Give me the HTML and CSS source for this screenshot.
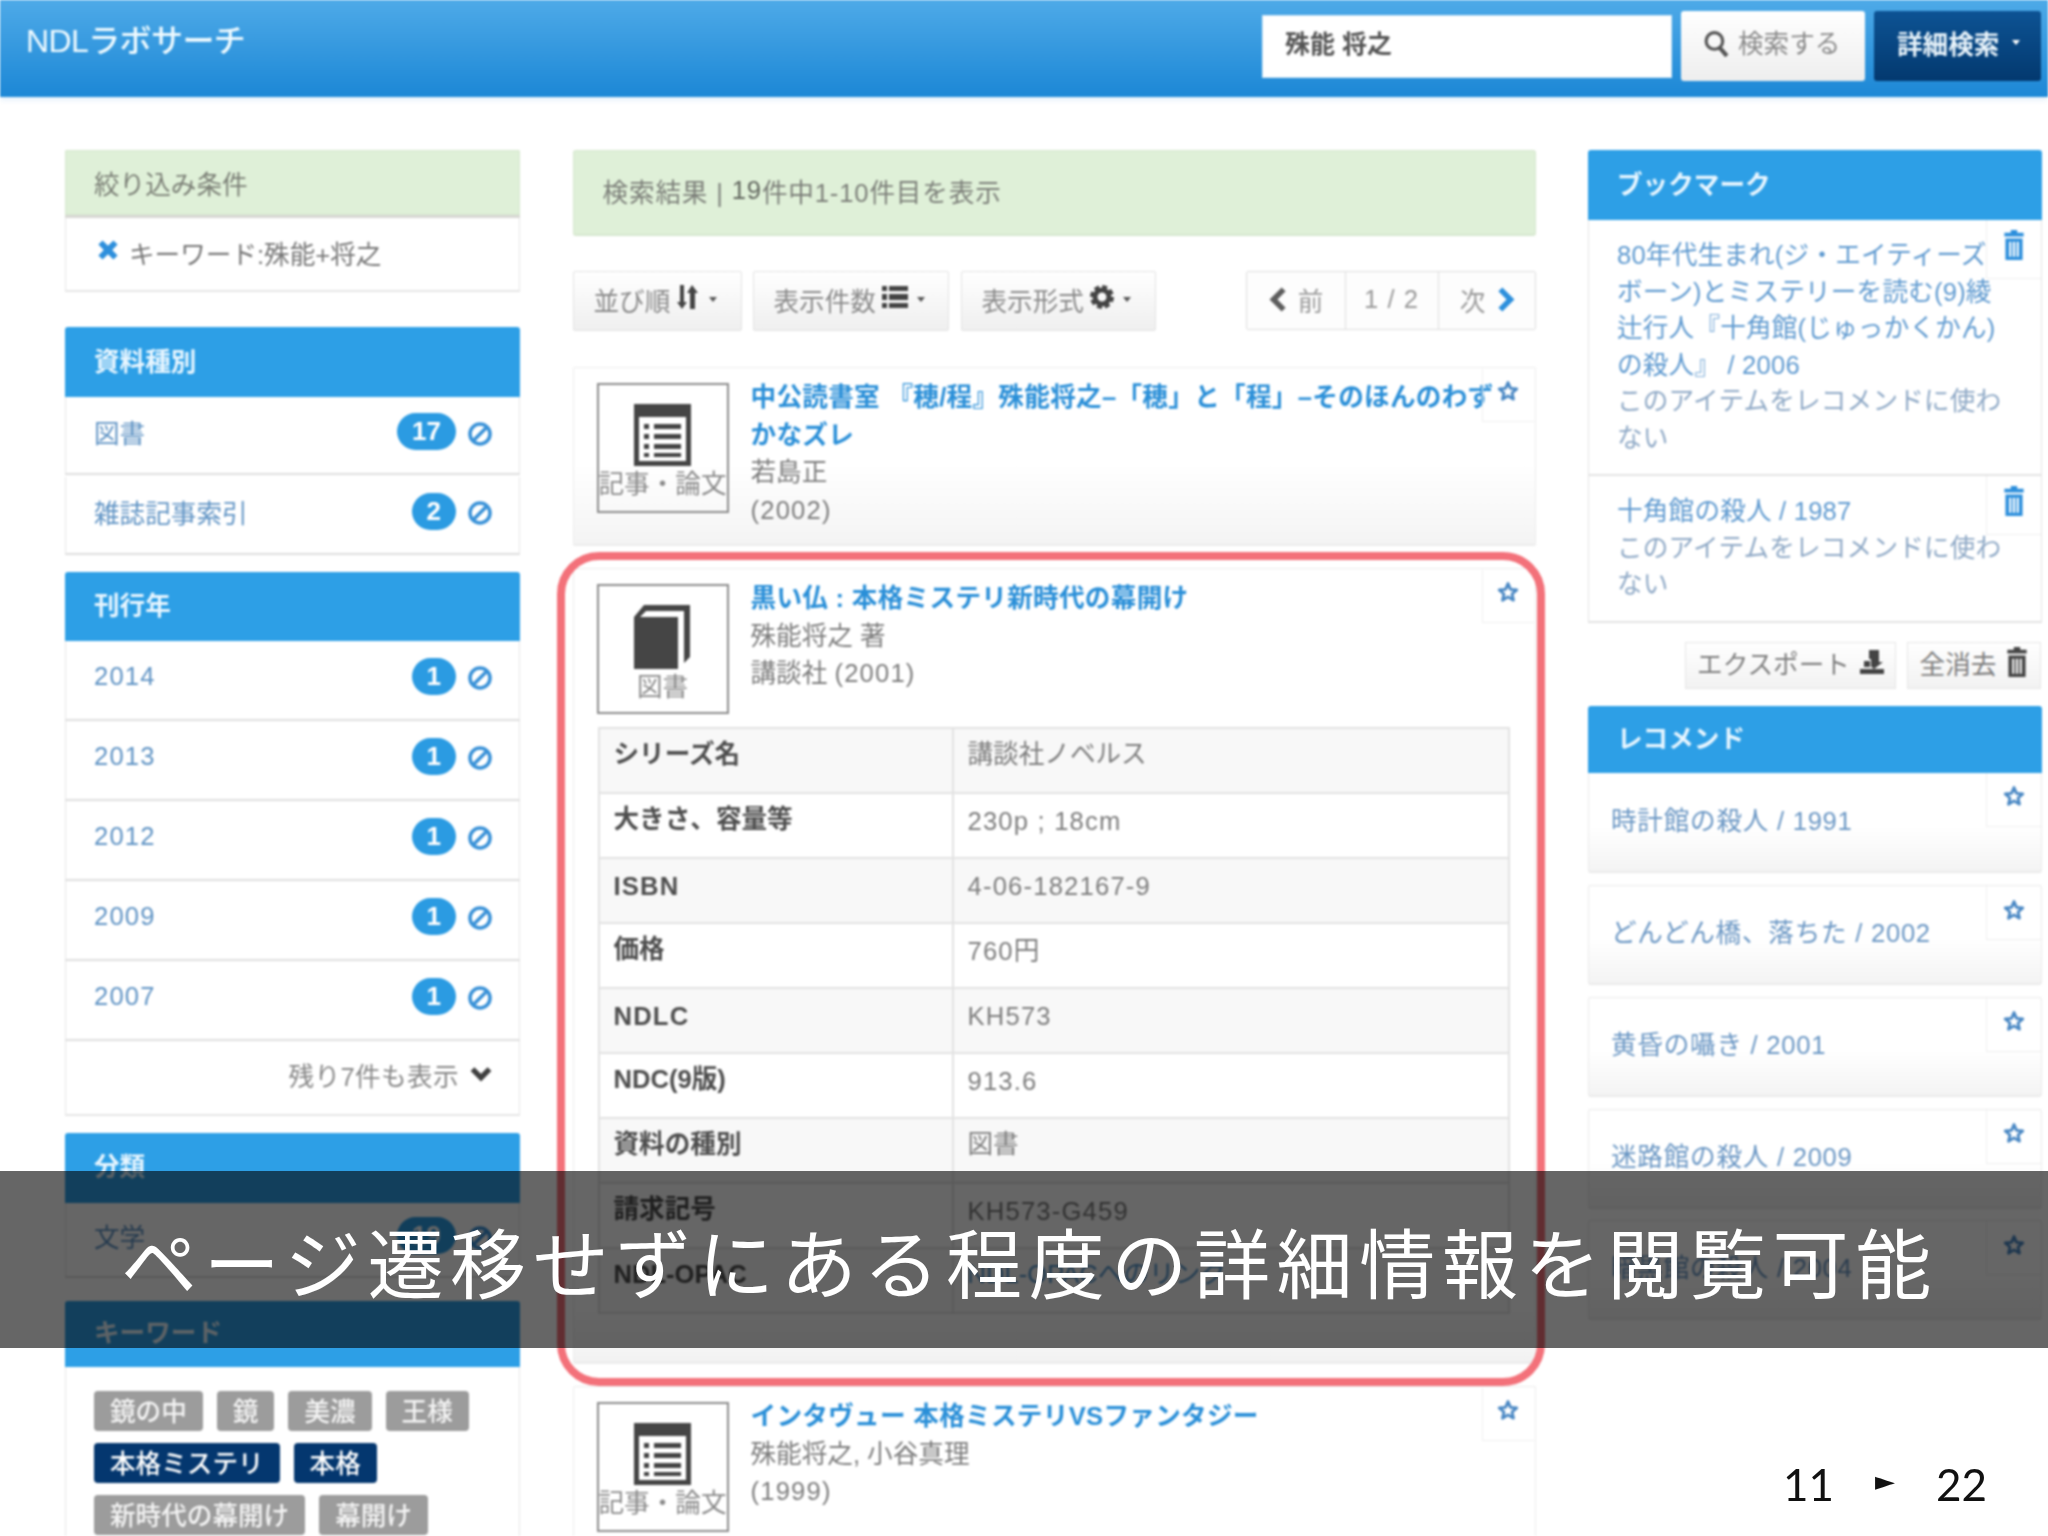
FILE: index.html
```html
<!DOCTYPE html>
<html lang="ja">
<head>
<meta charset="utf-8">
<title>NDLラボサーチ</title>
<link rel="stylesheet" href="styles.css">
</head>
<body>
<svg class="defs" aria-hidden="true">
  <symbol id="i-x" viewBox="0 0 20 20"><path d="M2 5.5 5.5 2 10 6.5 14.500 2 18 5.500 13.500 10 18 14.500 14.500 18 10 13.500 5.500 18 2 14.500 6.500 10Z" fill="currentColor"/></symbol>
  <symbol id="i-ban" viewBox="0 0 26 26"><circle cx="13" cy="13" r="10" fill="none" stroke="currentColor" stroke-width="3.600"/><path d="M6 20 20 6" stroke="currentColor" stroke-width="3.600"/></symbol>
  <symbol id="i-doc" viewBox="0 0 57 62"><path fill-rule="evenodd" fill="currentColor" d="M0 0H57V62H0ZM5 13V57H52V13Z"/><g fill="currentColor"><rect x="10" y="20" width="5" height="5"/><rect x="10" y="30" width="5" height="5"/><rect x="10" y="40" width="5" height="5"/><rect x="10" y="49" width="5" height="4"/><rect x="20" y="20" width="27" height="5"/><rect x="20" y="30" width="27" height="5"/><rect x="20" y="40" width="27" height="5"/><rect x="20" y="49" width="27" height="4"/></g></symbol>
  <symbol id="i-book" viewBox="0 0 57 64"><path fill="currentColor" d="M0 12 10 0H56V52L50 58V6H12L6 12H44V64H0Z"/></symbol>
  <symbol id="i-star" viewBox="0 0 22 22"><path d="M11 2.500 13.500 8.400 19.800 8.900 15 13 16.500 19.200 11 15.900 5.500 19.200 7 13 2.200 8.900 8.500 8.400Z" fill="none" stroke="currentColor" stroke-width="2.800" stroke-linejoin="round"/></symbol>
  <symbol id="i-search" viewBox="0 0 26 26"><circle cx="11" cy="10.500" r="8" fill="none" stroke="currentColor" stroke-width="3"/><path d="M16 17 23 25" stroke="currentColor" stroke-width="4"/></symbol>
  <symbol id="i-sort" viewBox="0 0 24 26"><path fill="currentColor" d="M4 1H8V18H11L6 25 1 18H4ZM16 1 22 9H19V25H14V9H11Z"/></symbol>
  <symbol id="i-rows" viewBox="0 0 26 22"><path fill="currentColor" d="M0 0H5V5H0ZM7 0H26V5H7ZM0 8H5V14H0ZM7 8H26V14H7ZM0 17H5V22H0ZM7 17H26V22H7Z"/></symbol>
  <symbol id="i-cog" viewBox="0 0 24 24"><circle cx="12" cy="12" r="7" fill="none" stroke="currentColor" stroke-width="5"/><circle cx="12" cy="12" r="10" fill="none" stroke="currentColor" stroke-width="4" stroke-dasharray="4.850 2.990"/></symbol>
  <symbol id="i-left" viewBox="0 0 16 24"><path d="M13 3 4 12 13 21" fill="none" stroke="currentColor" stroke-width="5"/></symbol>
  <symbol id="i-right" viewBox="0 0 16 24"><path d="M3 3 12 12 3 21" fill="none" stroke="currentColor" stroke-width="5"/></symbol>
  <symbol id="i-down" viewBox="0 0 22 16"><path d="M3 3 11 11 19 3" fill="none" stroke="currentColor" stroke-width="5"/></symbol>
  <symbol id="i-trash" viewBox="0 0 20 28"><path fill="currentColor" fill-rule="evenodd" d="M7 0H13V2.500H19V6H1V2.500H7ZM2 8H18V28H2ZM5.500 11V25H7.500V11ZM9 11V25H11V11ZM12.500 11V25H14.500V11Z"/></symbol>
  <symbol id="i-export" viewBox="0 0 24 24"><path fill="currentColor" d="M9 0H19V12H23L14 19 11 16.500V9H9ZM0 19H24V24H0Z"/><rect x="4" y="11" width="6" height="6" fill="currentColor"/></symbol>
</svg>

<div class="shot">
  <header class="topbar">
    <div class="brand">NDLラボサーチ</div>
    <div class="search">
      <div class="search-input">殊能 将之</div>
      <div class="search-btn"><svg class="ic ic-search"><use href="#i-search"/></svg>検索する</div>
      <div class="adv-btn">詳細検索<span class="caret caret-light"></span></div>
    </div>
  </header>

  <div class="columns">
    <aside class="col-left">
      <section class="panel panel-filter">
        <h3 class="panel-head panel-head-green">絞り込み条件</h3>
        <div class="filter-row"><svg class="ic ic-x"><use href="#i-x"/></svg>キーワード:殊能+将之</div>
      </section>

      <section class="panel">
        <h3 class="panel-head">資料種別</h3>
        <div class="facet facet-type"><span class="facet-label">図書</span><span class="badge">17</span><svg class="ic ic-ban"><use href="#i-ban"/></svg></div>
        <div class="facet facet-type"><span class="facet-label">雑誌記事索引</span><span class="badge">2</span><svg class="ic ic-ban"><use href="#i-ban"/></svg></div>
      </section>

      <section class="panel">
        <h3 class="panel-head panel-head-year">刊行年</h3>
        <div class="facet"><span class="facet-label num">2014</span><span class="badge">1</span><svg class="ic ic-ban"><use href="#i-ban"/></svg></div>
        <div class="facet"><span class="facet-label num">2013</span><span class="badge">1</span><svg class="ic ic-ban"><use href="#i-ban"/></svg></div>
        <div class="facet"><span class="facet-label num">2012</span><span class="badge">1</span><svg class="ic ic-ban"><use href="#i-ban"/></svg></div>
        <div class="facet"><span class="facet-label num">2009</span><span class="badge">1</span><svg class="ic ic-ban"><use href="#i-ban"/></svg></div>
        <div class="facet"><span class="facet-label num">2007</span><span class="badge">1</span><svg class="ic ic-ban"><use href="#i-ban"/></svg></div>
        <div class="more-row">残り7件も表示<svg class="ic ic-down"><use href="#i-down"/></svg></div>
      </section>

      <section class="panel panel-class">
        <h3 class="panel-head">分類</h3>
        <div class="facet facet-class"><span class="facet-label">文学</span><span class="badge">19</span><svg class="ic ic-ban"><use href="#i-ban"/></svg></div>
      </section>

      <section class="panel">
        <h3 class="panel-head panel-head-kw">キーワード</h3>
        <div class="tags">
          <span class="tag">鏡の中</span><span class="tag">鏡</span><span class="tag">美濃</span><span class="tag">王様</span>
          <span class="tag tag-on">本格ミステリ</span><span class="tag tag-on">本格</span>
          <span class="tag">新時代の幕開け</span><span class="tag">幕開け</span>
        </div>
      </section>
    </aside>

    <main class="col-main">
      <div class="alert">検索結果 | <b>19</b>件中1-10件目を表示</div>

      <div class="toolbar">
        <div class="tool-btn tool-sort">並び順<svg class="ic ic-sort"><use href="#i-sort"/></svg><span class="caret"></span></div>
        <div class="tool-btn tool-count">表示件数<svg class="ic ic-rows"><use href="#i-rows"/></svg><span class="caret"></span></div>
        <div class="tool-btn tool-view">表示形式<svg class="ic ic-cog"><use href="#i-cog"/></svg><span class="caret"></span></div>
        <div class="pager">
          <div class="page-cell page-prev"><svg class="ic ic-chev ic-chev-dark"><use href="#i-left"/></svg>前</div>
          <div class="page-cell page-num">1 / 2</div>
          <div class="page-cell page-next">次<svg class="ic ic-chev"><use href="#i-right"/></svg></div>
        </div>
      </div>

      <article class="card">
        <div class="star-box"><svg class="ic ic-star"><use href="#i-star"/></svg></div>
        <div class="card-head">
          <div class="type-box"><svg class="ic ic-doc"><use href="#i-doc"/></svg><span>記事・論文</span></div>
          <div class="card-text">
            <a class="card-title">中公読書室 『穂/程』殊能将之–「穂」と「程」–そのほんのわずかなズレ</a>
            <div>若島正</div>
            <div class="num">(2002)</div>
          </div>
        </div>
      </article>

      <article class="card card-open">
        <div class="star-box"><svg class="ic ic-star"><use href="#i-star"/></svg></div>
        <div class="card-head">
          <div class="type-box"><svg class="ic ic-book"><use href="#i-book"/></svg><span>図書</span></div>
          <div class="card-text">
            <a class="card-title">黒い仏 : 本格ミステリ新時代の幕開け</a>
            <div>殊能将之 著</div>
            <div>講談社 <span class="num">(2001)</span></div>
          </div>
        </div>
        <table class="detail">
          <tr><th>シリーズ名</th><td>講談社ノベルス</td></tr>
          <tr><th>大きさ、容量等</th><td class="num">230p ; 18cm</td></tr>
          <tr><th class="num">ISBN</th><td class="num">4-06-182167-9</td></tr>
          <tr><th>価格</th><td class="num">760円</td></tr>
          <tr><th class="num">NDLC</th><td class="num">KH573</td></tr>
          <tr><th>NDC(9版)</th><td class="num">913.6</td></tr>
          <tr><th>資料の種別</th><td>図書</td></tr>
          <tr><th>請求記号</th><td class="num">KH573-G459</td></tr>
          <tr><th>NDL-OPAC</th><td><a class="link-plain">NDL-OPACへのリンク</a></td></tr>
        </table>
      </article>

      <article class="card card-last">
        <div class="star-box"><svg class="ic ic-star"><use href="#i-star"/></svg></div>
        <div class="card-head">
          <div class="type-box"><svg class="ic ic-doc"><use href="#i-doc"/></svg><span>記事・論文</span></div>
          <div class="card-text">
            <a class="card-title">インタヴュー 本格ミステリVSファンタジー</a>
            <div>殊能将之, 小谷真理</div>
            <div class="num">(1999)</div>
          </div>
        </div>
      </article>
    </main>

    <aside class="col-right">
      <section class="panel panel-bm">
        <h3 class="panel-head">ブックマーク</h3>
        <div class="bm-item">
          <div class="del-box"><svg class="ic ic-trash"><use href="#i-trash"/></svg></div>
          <a class="bm-link">80年代生まれ(ジ・エイティーズ<br>ボーン)とミステリーを読む(9)綾<br>辻行人『十角館(じゅっかくかん)<br>の殺人』 / 2006</a>
          <div class="bm-note">このアイテムをレコメンドに使わ<br>ない</div>
        </div>
        <div class="bm-item">
          <div class="del-box"><svg class="ic ic-trash"><use href="#i-trash"/></svg></div>
          <a class="bm-link">十角館の殺人 / 1987</a>
          <div class="bm-note">このアイテムをレコメンドに使わ<br>ない</div>
        </div>
      </section>

      <div class="bm-actions">
        <div class="action-btn action-export">エクスポート<svg class="ic ic-export"><use href="#i-export"/></svg></div>
        <div class="action-btn action-clear">全消去<svg class="ic ic-trash-dark"><use href="#i-trash"/></svg></div>
      </div>

      <section class="panel panel-rec">
        <h3 class="panel-head panel-head-rec">レコメンド</h3>
        <div class="rec-item rec-first"><div class="star-box star-box-rec"><svg class="ic ic-star"><use href="#i-star"/></svg></div>時計館の殺人 / 1991</div>
      </section>
      <div class="rec-item"><div class="star-box star-box-rec"><svg class="ic ic-star"><use href="#i-star"/></svg></div>どんどん橋、落ちた / 2002</div>
      <div class="rec-item"><div class="star-box star-box-rec"><svg class="ic ic-star"><use href="#i-star"/></svg></div>黄昏の囁き / 2001</div>
      <div class="rec-item"><div class="star-box star-box-rec"><svg class="ic ic-star"><use href="#i-star"/></svg></div>迷路館の殺人 / 2009</div>
      <div class="rec-item"><div class="star-box star-box-rec"><svg class="ic ic-star"><use href="#i-star"/></svg></div>暗黒館の殺人 / 2004</div>
    </aside>
  </div>
</div>

<div class="band">ページ遷移せずにある程度の詳細情報を閲覧可能</div>
<div class="slide-no"><span>11</span><span class="slide-arrow">►</span><span>22</span></div>
</body>
</html>
```

FILE: styles.css
```css
* { box-sizing: border-box; }
html, body { margin: 0; padding: 0; height: 1536px; overflow: hidden; background: #fff; }
body {
  position: relative;
  width: 2048px;
  font-family: "Liberation Sans", "Noto Sans CJK JP", sans-serif;
  font-size: 25.6px;
  color: #6b6b6b;
}
.defs { position: absolute; width: 0; height: 0; }
.shot { filter: blur(0.9px); height: 1536px; overflow: hidden; }
.ic { display: block; flex: none; }
.num { letter-spacing: 1.2px; }

/* top bar */
.topbar {
  height: 97px;
  display: flex;
  align-items: center;
  justify-content: space-between;
  padding: 0 7px 0 26px;
  background: linear-gradient(#4eaae8, #1d88d6);
  border-bottom: 2px solid #1e8ad8;
  box-shadow: 0 3px 5px rgba(30, 130, 210, .12);
}
.brand { color: #eefaff; font-size: 32px; letter-spacing: -.6px; font-weight: 500; margin-bottom: 19px; }
.search { display: flex; gap: 9px; align-items: center; margin-bottom: 3px; }
.search-input {
  width: 410px; height: 63px; background: #fff; padding: 0 0 8px 22px;
  display: flex; align-items: center; color: #555; font-weight: 700; font-size: 25px;
  border: 1px solid #cfe6f5;
}
.search-btn {
  width: 184px; height: 70px; display: flex; align-items: center; gap: 8px;
  padding: 0 0 9px 22px; background: linear-gradient(#fff, #eeeeee); color: #8a8a8a; font-size: 25.6px; border-radius: 3px;
}
.ic-search { width: 27px; height: 27px; color: #555; margin-top: 4px; }
.adv-btn {
  width: 167px; height: 70px; display: flex; align-items: center; padding: 0 0 8px 23px;
  background: linear-gradient(#0d5394, #03396f); color: #e9f4fb; font-weight: 700; font-size: 25.6px; border-radius: 3px;
}
.caret { display: block; width: 0; height: 0; margin-left: 9px; border: 4px solid transparent; border-top: 5px solid #555; margin-top: 5px; }
.caret-light { border-top-color: #fff; margin-left: 13px; }

/* columns */
.columns {
  display: grid;
  grid-template-columns: 455px 963px 454px;
  column-gap: 52.500px;
  padding: 53px 0 0 65px;
  align-items: start;
}
h3 { margin: 0; font-size: inherit; font-weight: 700; }

/* panels */
.panel { margin-bottom: 17px; background: #fff; }
.panel-filter { margin-bottom: 35px; }
.panel-class { margin-bottom: 23px; }
.panel-head {
  height: 70px; display: flex; align-items: center; padding: 0 0 6px 29px;
  background: #2d9fe6; color: #e8f6ff; border-radius: 3px 3px 0 0; font-size: 25.6px;
}
.panel-head-year { height: 69px; }
.panel-head-kw { height: 66px; }
.panel-head-green {
  height: 68px; padding-bottom: 1px; background: #dff0d8; color: #7b7f76; font-weight: 400;
  border-bottom: 3px solid #d8d8d4; border-radius: 2px 2px 0 0; box-shadow: inset 0 0 0 1px #d6e7cf;
}
.filter-row {
  height: 74px; display: flex; align-items: center; gap: 9px; padding: 0 0 4px 30px;
  border: 1px solid #e6e6e6; border-top: 0; border-bottom-width: 2px; color: #777;
}
.ic-x { width: 24px; height: 24px; color: #2d8fdc; margin-bottom: 4px; }

.facet {
  height: 80px; display: flex; align-items: center; padding: 0 26px 7px 28px;
  border: 1px solid #e6e6e6; border-top: 0; border-bottom: 2px solid #dedede;
}
.facet-type { height: 78px; }
.facet-type + .facet-type { margin-top: 1.500px; }
.facet-class { height: 75px; }
.facet-label { flex: 1; color: #5f93c4; }
.facet .ic-ban { margin-top: 4px; }
.badge {
  min-width: 42px; height: 37px; border-radius: 19px; padding: 0 15px;
  background: #2b9be2; color: #fff; font-weight: 700; font-size: 26px;
  display: flex; align-items: center; justify-content: center; margin-right: 11px;
}
.ic-ban { width: 26px; height: 26px; color: #3a92d8; }
.more-row {
  height: 75px; display: flex; align-items: center; justify-content: flex-end; gap: 10px;
  padding: 0 26px 6px 0; border: 1px solid #e6e6e6; border-top: 0; border-bottom-width: 2px; color: #888; letter-spacing: .4px;
}
.ic-down { width: 24px; height: 17px; color: #3f3f3f; }
.tags {
  display: flex; flex-wrap: wrap; align-content: flex-start; column-gap: 14px; row-gap: 12px;
  padding: 24px 40px 0 28px; border: 1px solid #e6e6e6; border-top: 0; height: 180px;
}
.tag {
  height: 40px; padding: 0 16px 3px; background: #9c9c9c; color: #f4f4f4; border-radius: 4px;
  display: flex; align-items: center; font-weight: 500;
}
.tag-on { background: #04376f; color: #fff; }

/* main column */
.alert {
  height: 86px; display: flex; align-items: center; padding: 0 0 4px 29px; white-space: pre;
  background: #dff0d8; color: #7c7f79; border-radius: 3px; margin-bottom: 35px; letter-spacing: .85px;
  border: 1px solid #d6e7cf; border-bottom-width: 2px;
}
.alert b { color: #62675f; font-weight: 500; }
.toolbar { display: flex; height: 60px; margin-bottom: 36px; color: #8a8a8a; }
.tool-btn {
  display: flex; align-items: center; height: 60px; padding: 0 0 4px 20px;
  background: linear-gradient(#fff, #efefef); border: 1px solid #e3e3e3; border-radius: 2px; font-size: 25.6px;
}
.tool-sort { width: 169px; margin-right: 11px; }
.tool-count { width: 196px; margin-right: 12px; }
.tool-view { width: 195px; }
.ic-sort { width: 24px; height: 26px; color: #444; margin: 0 0 4px 6px; }
.ic-rows { width: 26px; height: 22px; color: #444; margin: 0 0 4px 6px; }
.ic-cog { width: 24px; height: 24px; color: #444; margin: 0 0 4px 6px; }
.pager { margin-left: auto; display: flex; height: 59px; border: 1px solid #dedede; border-radius: 2px; }
.page-cell { display: flex; align-items: center; justify-content: center; gap: 10px; padding-bottom: 3px; border-left: 1px solid #dedede; background: #fdfdfd; color: #9a9a9a; }
.page-prev { width: 98px; border-left: 0; }
.page-num { width: 93px; letter-spacing: 1px; }
.page-next { width: 97px; gap: 11px; padding-left: 3px; }
.ic-chev { width: 20px; height: 27px; color: #2d8fdc; }
.ic-chev-dark { color: #5d5d5d; }

.card {
  position: relative; margin-bottom: 22px; padding: 15px 0 0 23px; height: 179px;
  border: 1px solid #ececec; border-bottom-width: 2px;
  background: linear-gradient(#fff 55%, #f4f4f4);
  border-radius: 2px;
}
.card-open { height: 796px; background: linear-gradient(#fff 93%, #f1f1f1); }
.card-open::after {
  content: ""; position: absolute; inset: -17px -10px -24px -17px;
  border: 8px solid #f3717a; border-radius: 42px; pointer-events: none;
}
.card-last { height: 300px; background: #fff; border-bottom: 0; }
.star-box {
  position: absolute; top: 1px; right: 1px; width: 52px; height: 53px;
  display: flex; align-items: center; justify-content: center;
  border-left: 1px solid #efefef; border-bottom: 1px solid #efefef; padding-bottom: 8px;
}
.ic-star { width: 22px; height: 22px; color: #4a88c4; }
.card-head { display: flex; gap: 22px; }
.type-box {
  width: 132px; height: 130px; flex: none; border: 2px solid #8c8c8c;
  display: flex; flex-direction: column; align-items: center; padding-top: 19px;
  white-space: nowrap; line-height: 37px; color: #8a8a8a;
}
.ic-doc { width: 57px; height: 62px; color: #454545; }
.ic-book { width: 57px; height: 64px; color: #454545; }
.card-text { width: 748px; margin-top: -4px; line-height: 37.500px; color: #7d7d7d; }
.card-title { display: block; color: #2a8fd8; font-weight: 700; letter-spacing: .3px; }
.detail {
  width: 912px; margin: 13px 0 0 1px; border-collapse: collapse; table-layout: fixed;
}
.detail tr { height: 65px; }
.detail tr:nth-child(odd) { background: #f8f8f8; }
.detail th, .detail td { border: 2px solid #e2e2e2; padding: 0 0 13px 14px; text-align: left; line-height: 32px; }
.detail th.num, .detail td.num { padding-bottom: 9px; }
.detail th { width: 354px; color: #4e4e4e; font-weight: 700; }
.detail td { color: #7d7d7d; }
.link-plain { color: #4f90c6; }

/* right column */
.panel-bm { margin-bottom: 19px; }
.bm-item {
  position: relative; padding: 17px 32px 18px 28px; line-height: 36.500px;
  border: 1px solid #e3e3e3; border-top: 0; border-bottom-width: 2px; white-space: nowrap; letter-spacing: .2px;
}
.bm-link { color: #5f9ad0; display: block; }
.bm-note { color: #8fa9c6; }
.del-box {
  position: absolute; top: 0; right: 0; width: 55px; height: 59px; background: #fff;
  display: flex; justify-content: center; padding-top: 10px;
  border-left: 1px solid #efefef; border-bottom: 1px solid #efefef;
}
.ic-trash { width: 22px; height: 30px; color: #2d8fdc; }
.bm-actions { display: flex; justify-content: flex-end; gap: 11px; padding-right: 1px; margin-bottom: 17px; }
.action-btn {
  height: 47px; display: flex; align-items: center; justify-content: center; gap: 10px; padding-bottom: 6px;
  background: linear-gradient(#fff, #f2f2f2); border: 1px solid #e6e6e6; color: #7e7e7e; font-size: 25.6px;
}
.action-export { width: 211px; }
.action-clear { width: 134px; }
.ic-export { width: 24px; height: 24px; color: #444; }
.ic-trash-dark { width: 22px; height: 30px; color: #454545; }
.panel-rec { margin-bottom: 12.700px; }
.panel-head-rec { height: 67px; }
.rec-item {
  position: relative; height: 100px; padding: 29px 0 0 22px; margin-bottom: 11.700px; line-height: 36px; letter-spacing: .75px;
  border: 1px solid #eaeaea; border-bottom-width: 2px; border-radius: 3px;
  background: linear-gradient(#fff 55%, #f4f4f4); color: #6b97c4;
}
.rec-first { border-top: 0; border-radius: 0 0 3px 3px; padding-top: 30px; }
.star-box-rec { top: 0; right: 0; width: 55px; height: 54px; padding-bottom: 6px; }

/* slide annotations */
.band {
  position: absolute; left: 0; right: 0; top: 1171px; height: 177px;
  background: rgba(0, 0, 0, .6); color: #fff;
  display: flex; align-items: center; padding: 0 0 0 121px; white-space: nowrap;
  font-family: "Noto Sans CJK JP", sans-serif; font-size: 76px; letter-spacing: 6.650px; line-height: 1;
}
.slide-no {
  position: absolute; left: 1783px; top: 1454px; display: flex; align-items: center;
  font-family: "Lato", "Noto Sans", sans-serif; font-size: 44px; color: #111; line-height: 54px;
}
.slide-arrow { font-family: "DejaVu Sans", sans-serif; font-size: 26px; margin: 0 41px 6px 41px; }
```
